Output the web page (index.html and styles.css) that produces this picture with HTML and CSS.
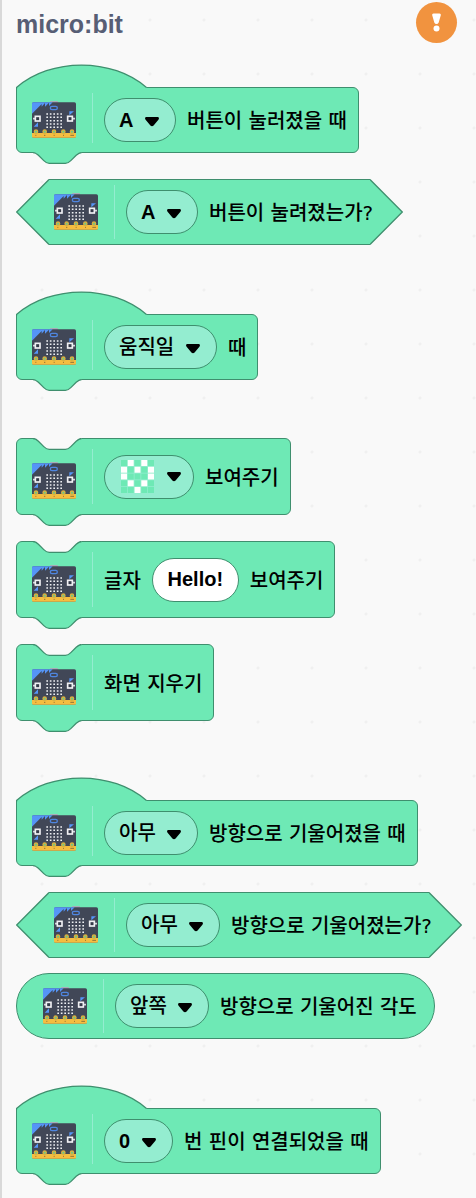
FILE: index.html
```html
<!DOCTYPE html>
<html lang="ko">
<head>
<meta charset="utf-8">
<meta name="viewport" content="width=device-width, initial-scale=1">
<title>micro:bit</title>
<link rel="stylesheet" href="styles.css">
</head>
<body>
<svg class="defs" aria-hidden="true">
  <symbol id="board" viewBox="0 0 132 111">
    <rect x="54" y="0" width="24" height="8" rx="2" fill="#a9abb8"/>
    <rect x="0" y="4" width="132" height="106" rx="5" fill="#414757"/>
    <path d="M0 38V8q0-4 4-4h58L51 15V5L39 17V6L29 17V9z" fill="#5595f7"/>
    <path d="M112 43V31h14zM5 77l13-13v13z" fill="#5595f7"/>
    <rect x="55" y="16" width="21" height="10" rx="5" fill="none" stroke="#4f86e0" stroke-width="4"/>
    <path d="M3 53h7M122 53h7" stroke="#d5d7dd" stroke-width="5"/>
    <rect x="10" y="46" width="14" height="14" fill="#343948" stroke="#f0f0f3" stroke-width="5"/>
    <rect x="107" y="46" width="14" height="14" fill="#343948" stroke="#f0f0f3" stroke-width="5"/>
    <path d="M43 39h48M43 49h48M43 59h48M43 69h48M43 79h48" stroke="#eef0f3" stroke-width="4.500" stroke-dasharray="5 5.500"/>
    <path d="M0 96h132v10q0 4-4 4H4q-4 0-4-4z" fill="#f5bd40"/>
    <g fill="#67c98a" stroke="#d9b03f" stroke-width="4">
      <circle cx="12" cy="92" r="5"/><circle cx="38" cy="92" r="5"/><circle cx="66" cy="92" r="5"/><circle cx="94" cy="92" r="5"/><circle cx="120" cy="92" r="5"/>
    </g>
    <path d="M10 103h3M36 103h4M65 103h3M93 103h3M115 103h11" stroke="#8d7439" stroke-width="3"/>
  </symbol>
  <symbol id="hat" viewBox="0 0 132 25">
    <path class="fill" d="M.5 25V23.500C34.500-6.500 96.500-6.500 130.500 23.500V25z"/>
    <path class="line" d="M.5 25V23.500C34.500-6.500 96.500-6.500 130.500 23.500"/>
  </symbol>
  <symbol id="bump" viewBox="0 0 68 14">
    <path class="fill" d="M17 0V1.500c2.700 0 4 1.400 5.400 2.700l5.400 5.400c1.400 1.400 2.700 2.700 5.400 2.700h16.200c2.700 0 4-1.300 5.400-2.700l5.400-5.400c1.300-1.300 2.700-2.700 5.400-2.700V0z"/>
    <path class="line" d="M17 1.500c2.700 0 4 1.400 5.400 2.700l5.400 5.400c1.400 1.400 2.700 2.700 5.400 2.700h16.200c2.700 0 4-1.300 5.400-2.700l5.400-5.400c1.300-1.300 2.700-2.700 5.400-2.700"/>
  </symbol>
  <symbol id="notch" viewBox="0 0 68 13">
    <path class="gap" d="M17 0V.5c2.700 0 4 1.400 5.400 2.700l5.400 5.400c1.400 1.400 2.700 2.700 5.400 2.700h16.200c2.700 0 4-1.300 5.400-2.700l5.400-5.400c1.300-1.300 2.700-2.700 5.400-2.700V0z"/>
    <path class="line" d="M17 .5c2.700 0 4 1.400 5.400 2.700l5.400 5.400c1.400 1.400 2.700 2.700 5.400 2.700h16.200c2.700 0 4-1.300 5.400-2.700l5.400-5.400c1.300-1.300 2.700-2.700 5.400-2.700"/>
  </symbol>
  <symbol id="point" viewBox="0 0 33 66">
    <path class="fill" d="M33 .5L.7 33 33 65.500z"/>
    <path class="line" d="M33 .5L.7 33 33 65.500"/>
  </symbol>
  <symbol id="caret" viewBox="0 0 14 10">
    <path d="M1.500 0h11C14 0 14.400 1.600 13.400 2.700L8.600 8.500Q7 10 5.400 8.500L.6 2.700C-.4 1.600 0 0 1.500 0z"/>
  </symbol>
</svg>

<main class="palette">
  <header class="head">
    <h1 class="title">micro:bit</h1>
    <button class="status" type="button" aria-label="연결 상태">
      <svg viewBox="0 0 41 41"><path d="M17.500 11.500h6q1.700 0 1.300 1.700l-2.200 7.600q-.6 1.200-2.100 1.200t-2.100-1.200l-2.200-7.600q-.4-1.700 1.300-1.700z"/><circle cx="20.500" cy="26.500" r="3"/></svg>
    </button>
  </header>

  <section class="group">
    <div class="block hat">
      <svg class="hat-top"><use href="#hat"/></svg><svg class="bump"><use href="#bump"/></svg>
      <svg class="board"><use href="#board"/></svg><i class="divider"></i>
      <span class="drop"><select class="latin" aria-label="버튼"><option>A</option></select><svg class="caret"><use href="#caret"/></svg></span>
      <span class="label">버튼이 눌러졌을 때</span>
    </div>
    <div class="block bool">
      <svg class="point"><use href="#point"/></svg><svg class="point end"><use href="#point"/></svg>
      <svg class="board"><use href="#board"/></svg><i class="divider"></i>
      <span class="drop"><select class="latin" aria-label="버튼"><option>A</option></select><svg class="caret"><use href="#caret"/></svg></span>
      <span class="label">버튼이 눌려졌는가?</span>
    </div>
  </section>

  <section class="group">
    <div class="block hat">
      <svg class="hat-top"><use href="#hat"/></svg><svg class="bump"><use href="#bump"/></svg>
      <svg class="board"><use href="#board"/></svg><i class="divider"></i>
      <span class="drop"><select aria-label="동작"><option>움직일</option></select><svg class="caret"><use href="#caret"/></svg></span>
      <span class="label">때</span>
    </div>
  </section>

  <section class="group">
    <div class="block stack">
      <svg class="notch"><use href="#notch"/></svg><svg class="bump"><use href="#bump"/></svg>
      <svg class="board"><use href="#board"/></svg><i class="divider"></i>
      <button class="matrix" type="button" aria-label="LED 무늬">
        <svg class="leds" viewBox="0 0 33 33">
          <path class="off" d="M3 0v33M9.750 0v33M16.500 0v33M23.250 0v33M30 0v33"/>
          <path class="on" d="M9.750 0v6M23.250 0v6M3 6.750v6M16.500 6.750v6M30 6.750v6M3 13.500v6M30 13.500v6M9.750 20.250v6M23.250 20.250v6M16.500 27v6"/>
        </svg>
        <svg class="caret-in"><use href="#caret"/></svg>
      </button>
      <span class="label">보여주기</span>
    </div>
    <div class="block stack">
      <svg class="notch"><use href="#notch"/></svg><svg class="bump"><use href="#bump"/></svg>
      <svg class="board"><use href="#board"/></svg><i class="divider"></i>
      <label class="label" for="text">글자</label>
      <input class="text latin" id="text" type="text" value="Hello!">
      <span class="label">보여주기</span>
    </div>
    <div class="block stack">
      <svg class="notch"><use href="#notch"/></svg><svg class="bump"><use href="#bump"/></svg>
      <svg class="board"><use href="#board"/></svg><i class="divider"></i>
      <span class="label">화면 지우기</span>
    </div>
  </section>

  <section class="group">
    <div class="block hat">
      <svg class="hat-top"><use href="#hat"/></svg><svg class="bump"><use href="#bump"/></svg>
      <svg class="board"><use href="#board"/></svg><i class="divider"></i>
      <span class="drop"><select aria-label="방향"><option>아무</option></select><svg class="caret"><use href="#caret"/></svg></span>
      <span class="label">방향으로 기울어졌을 때</span>
    </div>
    <div class="block bool">
      <svg class="point"><use href="#point"/></svg><svg class="point end"><use href="#point"/></svg>
      <svg class="board"><use href="#board"/></svg><i class="divider"></i>
      <span class="drop"><select aria-label="방향"><option>아무</option></select><svg class="caret"><use href="#caret"/></svg></span>
      <span class="label">방향으로 기울어졌는가?</span>
    </div>
    <div class="block round">
      <svg class="board"><use href="#board"/></svg><i class="divider"></i>
      <span class="drop"><select aria-label="방향"><option>앞쪽</option></select><svg class="caret"><use href="#caret"/></svg></span>
      <span class="label">방향으로 기울어진 각도</span>
    </div>
  </section>

  <section class="group">
    <div class="block hat">
      <svg class="hat-top"><use href="#hat"/></svg><svg class="bump"><use href="#bump"/></svg>
      <svg class="board"><use href="#board"/></svg><i class="divider"></i>
      <span class="drop"><select class="latin" aria-label="핀"><option>0</option></select><svg class="caret"><use href="#caret"/></svg></span>
      <span class="label">번 핀이 연결되었을 때</span>
    </div>
  </section>
</main>
</body>
</html>
```

FILE: styles.css
```css
:root {
  --page: #f9f9f9;
  --fill: #6ee9b5;
  --line: #3f8f6e;
  --field: #94edd0;
}

* { box-sizing: border-box; }

body {
  margin: 0;
  min-height: 100vh;
  border-left: 2px solid #d9d9d9;
  background: radial-gradient(circle at 27px 27px, #f0f0f0 1px, transparent 2px) 15px -7px / 54px 54px var(--page);
  color: #000;
  font: 500 20px/24px "DejaVu Sans", "Noto Sans CJK KR", sans-serif;
}

svg { display: block; flex: none; }
.defs { position: absolute; width: 0; height: 0; }
.fill { fill: var(--fill); }
.gap { fill: var(--page); }
.line { fill: none; stroke: var(--line); stroke-width: 1.25px; }

.palette {
  display: flex;
  flex-direction: column;
  gap: 47px;
  padding: 2px 0 13px 14px;
}

.head {
  display: flex;
  align-items: center;
  justify-content: space-between;
  padding-right: 19px;
  margin-bottom: -25px;
}

.title {
  margin: 0;
  padding-top: 2px;
  color: #575e75;
  font: bold 25px/36px "Liberation Sans", Arial, sans-serif;
}

.status {
  width: 41px;
  height: 41px;
  padding: 0;
  border: 0;
  border-radius: 50%;
  background: #f1933f;
  fill: #fff;
}

.group {
  display: flex;
  flex-direction: column;
  align-items: flex-start;
  gap: 15px;
}

.block {
  position: relative;
  display: flex;
  align-items: center;
  min-height: 66px;
  border: 1px solid var(--line);
  border-radius: 6px;
  background: var(--fill);
  padding: 0 11px 0 15px;
  white-space: nowrap;
}

.hat {
  margin: 22px 0 11px;
  border-top-left-radius: 0;
}

.stack {
  min-height: 77px;
  margin-bottom: 11px;
}
.stack:last-child { margin-bottom: 10px; }

.bool {
  border-width: 1px 0;
  border-radius: 0;
  margin: 0 33px;
  padding: 0 0 0 5px;
}

.round {
  border-radius: 33px;
  padding: 0 17px 0 26px;
}

.hat-top { position: absolute; left: -1px; top: -24px; width: 132px; height: 25px; }
.bump { position: absolute; left: -1px; bottom: -13px; width: 68px; height: 14px; }
.notch { position: absolute; left: -1px; top: -1px; width: 68px; height: 13px; }
.point { position: absolute; left: -33px; top: -1px; width: 33px; height: 66px; }
.end { left: auto; right: -33px; transform: scaleX(-1); }

.board { position: relative; width: 44px; height: 37px; margin-bottom: 2px; }
.stack .board { margin-top: 10px; }

.divider {
  align-self: stretch;
  width: 1px;
  margin: 5px 11px 5px 16px;
  background: #94edd0;
}
.bool .divider { margin-right: 11px; }
.hat .divider { margin-bottom: 9px; }
.stack .divider { margin-top: 10px; margin-bottom: 10px; }

.label { position: relative; padding-top: 2px; }
.bool .label { margin-right: -3px; }
.drop + .label, .matrix + .label, .text + .label { margin-left: 11px; }

.drop { position: relative; display: flex; }

select, .text, .matrix {
  appearance: none;
  height: 44px;
  margin: 0;
  border: 1px solid var(--line);
  border-radius: 22px;
  background: var(--field);
  color: #000;
  font: inherit;
}

select { padding: 0 41px 0 14px; }
.latin { font-family: "Liberation Sans", Arial, sans-serif; font-weight: bold; }

.caret {
  position: absolute;
  right: 17px;
  top: 19px;
  width: 14px;
  height: 10px;
  pointer-events: none;
}

.matrix {
  display: flex;
  align-items: center;
  gap: 13px;
  padding: 0 12px 0 16px;
}
.leds { width: 33px; height: 33px; }
.leds path { stroke-width: 6px; stroke-dasharray: 6 0.75; }
.off { stroke: var(--fill); }
.on { stroke: #fff; }
.caret-in { width: 14px; height: 10px; }

.text {
  width: 87px;
  margin-left: 11px;
  padding: 0;
  background: #fff;
  text-align: center;
}
```
